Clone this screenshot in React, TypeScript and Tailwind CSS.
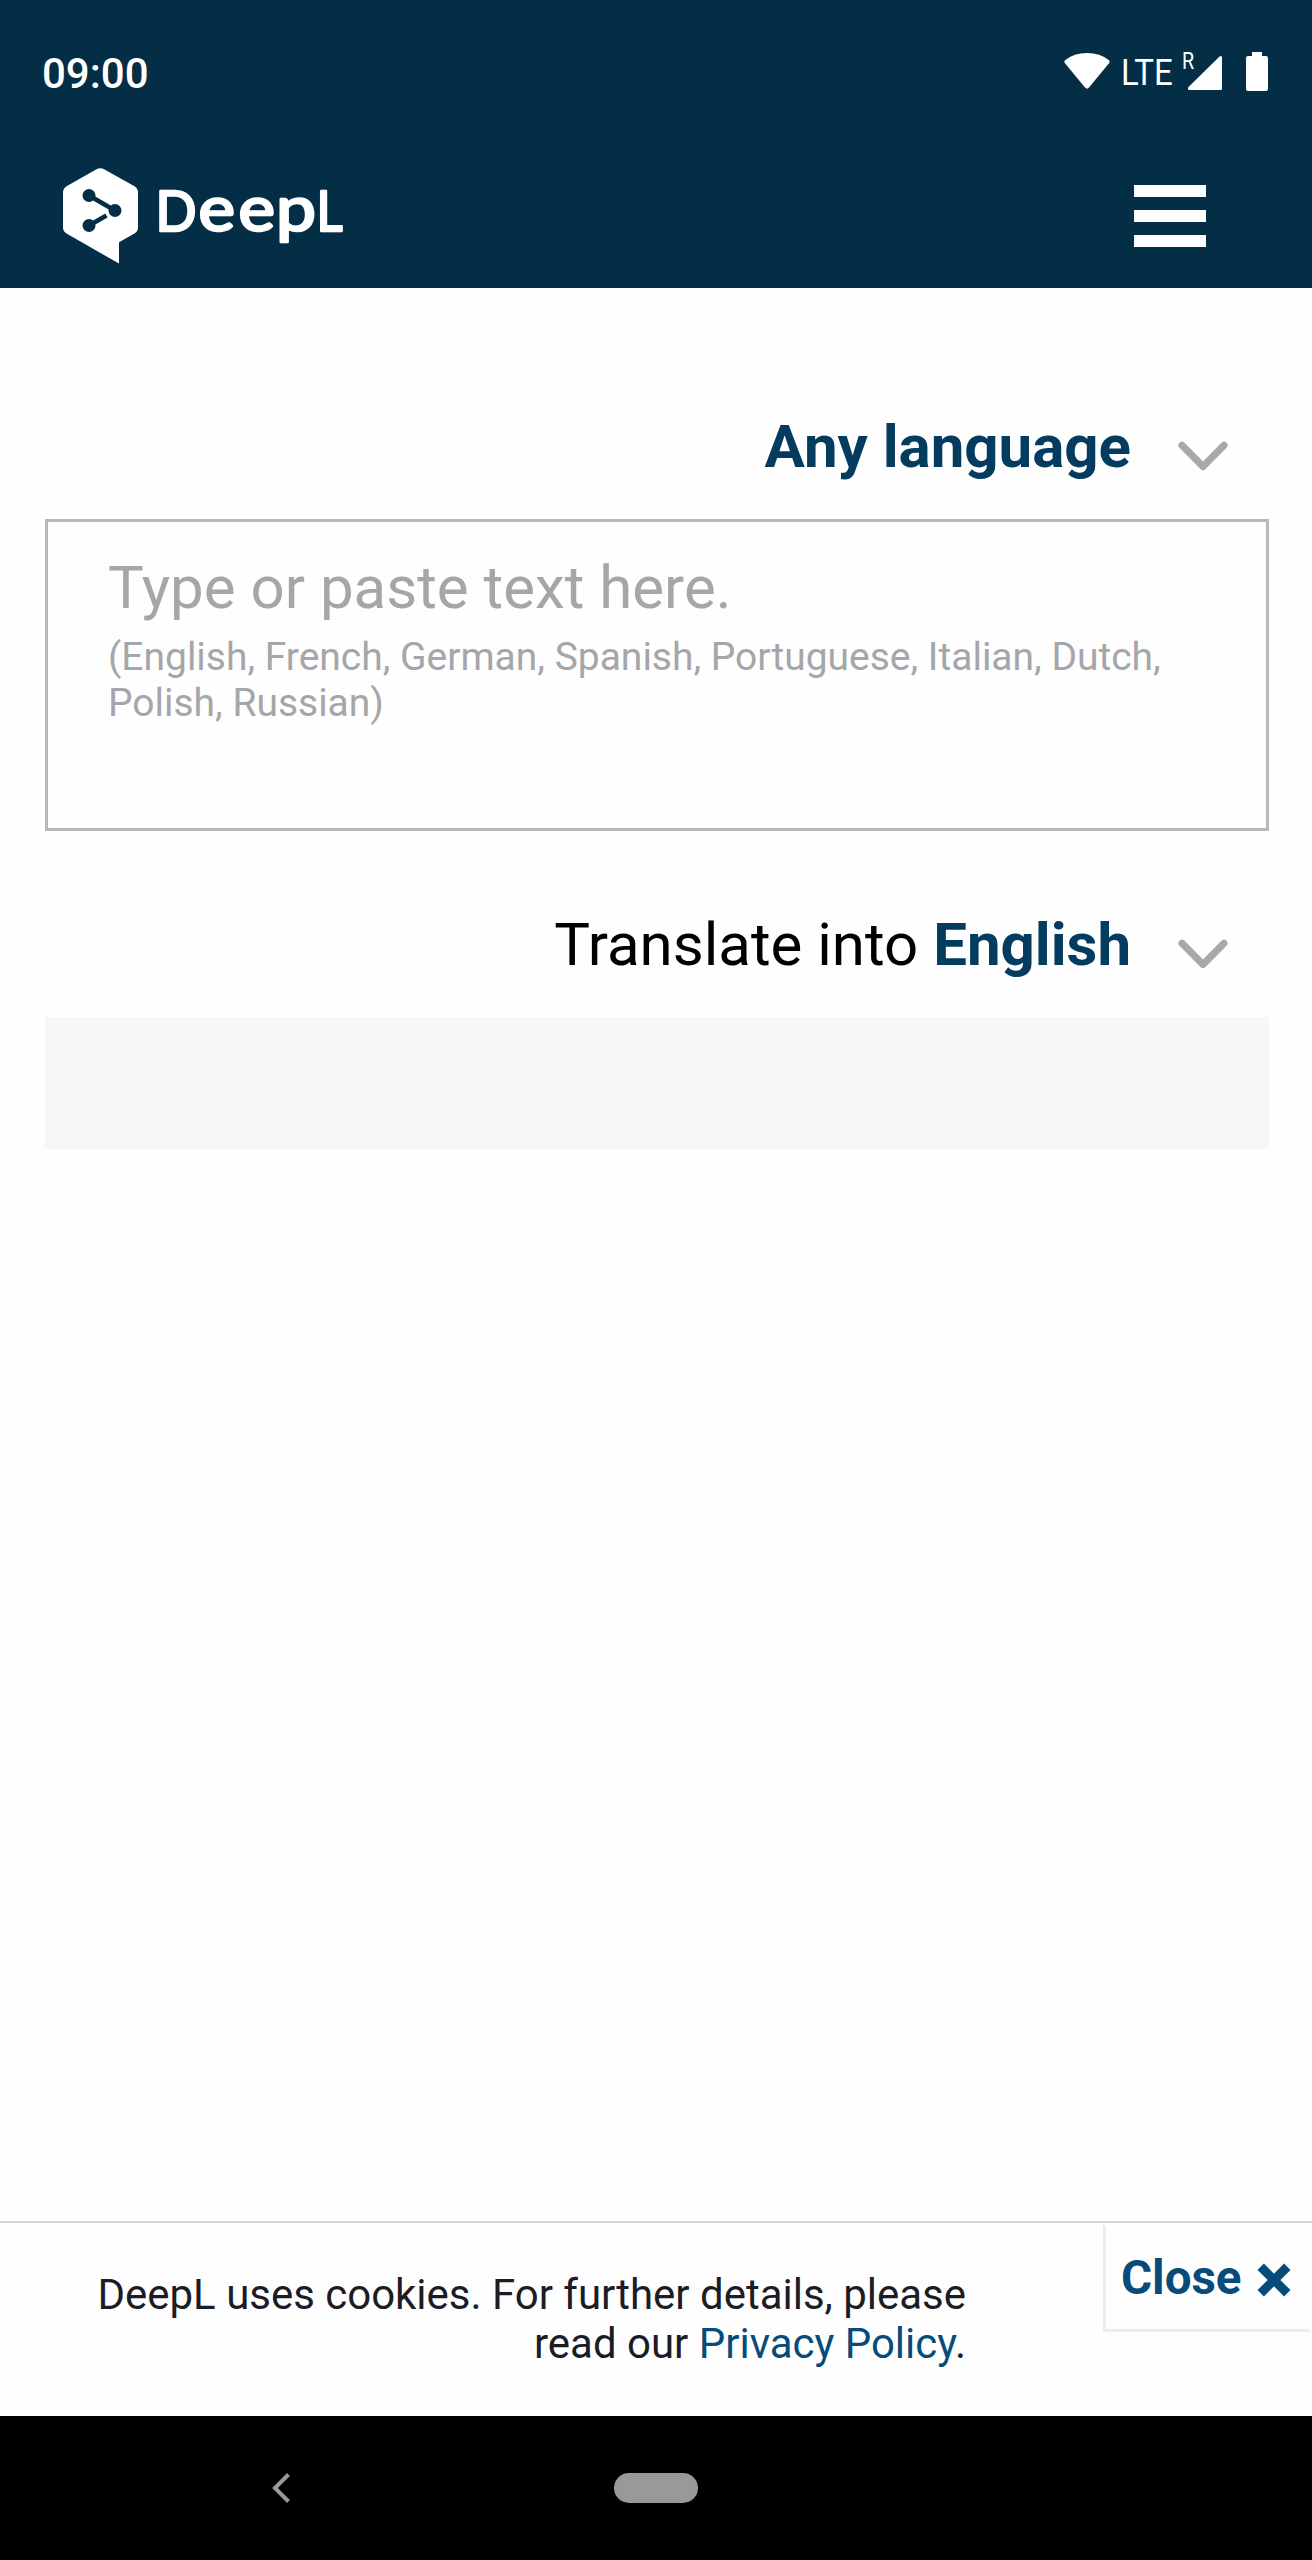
import React from "react";

function StatusBar() {
  return (
    <div className="flex h-[148px] items-center justify-between pl-[42px] pr-[44px] text-white">
      <span className="text-[42px] font-medium leading-none">09:00</span>
      <div className="flex h-[148px] items-start">
        <svg className="mt-[53px] h-[36px] w-[46px]" viewBox="0 0 46 36" fill="currentColor">
          <path d="M1 7.2Q10 0 23 0T45 7.2Q46.200 8.700 45 10.200L25 34.600Q23 36.800 21 34.600L1 10.200Q-.2 8.700 1 7.200Z" />
        </svg>
        <span className="ml-[11px] mt-[41px] w-[52px] origin-left scale-x-[0.89] whitespace-nowrap text-[37px] leading-[64px]">
          LTE
        </span>
        <span className="ml-[9px] mt-[41px] w-[6px] origin-left scale-x-[0.82] text-[24px] leading-[40px]">R</span>
        <svg className="mt-[56px] h-[34px] w-[34px]" viewBox="0 0 34 34" fill="currentColor">
          <path d="M31.300.7Q34-1 34 2V32.500Q34 34 32.500 34H1.500Q-1 33.500.5 31Z" />
        </svg>
        <svg className="ml-[24px] mt-[52px] h-[39px] w-[22px]" viewBox="0 0 22 39" fill="currentColor">
          <path d="M6 0H16V4H20Q22 4 22 6V37Q22 39 20 39H2Q0 39 0 37V6Q0 4 2 4H6Z" />
        </svg>
      </div>
    </div>
  );
}

function Logo() {
  return (
    <div className="flex items-start">
      <svg className="h-[96px] w-[75px]" viewBox="0 0 75 96">
        <path
          fill="#fff"
          d="M33.500 1.200Q37.300-.8 41.100 1.200L71.500 18.300Q75 20.500 75 24.500V59.500Q75 63.300 71.500 65.500L56 74.300V95.600L3.500 65.500Q0 63.300 0 59.500V24.500Q0 20.500 3.500 18.300Z"
        />
        <g fill="#042d46" stroke="#042d46" strokeWidth="4.600">
          <path d="M26 27.500L52 42.500M26 57.500L43.500 47.400" />
          <g stroke="none">
            <circle cx="26" cy="27.500" r="6.500" />
            <circle cx="52" cy="42.500" r="6.500" />
            <circle cx="26" cy="57.500" r="6.500" />
          </g>
        </g>
      </svg>
      <svg
        className="ml-[17px] h-[96px] w-[200px] font-['Lato']"
        viewBox="155 168 200 96"
        fill="#fff"
        stroke="#fff"
        strokeWidth="2.600"
        strokeLinejoin="round"
      >
        <text x="155.500" y="231" fontSize="57" textLength="41" lengthAdjust="spacingAndGlyphs">D</text>
        <text x="198.500" y="231" fontSize="62" textLength="36.500" lengthAdjust="spacingAndGlyphs">e</text>
        <text x="238.500" y="231" fontSize="62" textLength="36.500" lengthAdjust="spacingAndGlyphs">e</text>
        <text x="276" y="231" fontSize="62" textLength="40" lengthAdjust="spacingAndGlyphs">p</text>
        <text x="316.500" y="231" fontSize="57" textLength="26" lengthAdjust="spacingAndGlyphs">L</text>
      </svg>
    </div>
  );
}

function Chevron() {
  return (
    <svg className="mt-[18px] h-[30px] w-[52px]" viewBox="0 0 52 30" fill="none" stroke="#a9a9a9">
      <path d="M5 4.200L26 25.500L47 4.200" strokeWidth="7.200" strokeLinecap="round" strokeLinejoin="round" />
    </svg>
  );
}

function LanguageSelect({ prefix, language }: { prefix?: string; language: string }) {
  return (
    <button className="flex w-full items-center justify-end pr-[83px] text-[60px] leading-[70px]">
      <span className="mr-[46px] whitespace-pre">
        {prefix}
        <span className="font-bold text-[#043c60]">{language}</span>
      </span>
      <Chevron />
    </button>
  );
}

export default function App() {
  return (
    <div className="flex h-[2560px] w-[1312px] flex-col overflow-hidden bg-[#fefefe] font-['Roboto',sans-serif] text-black">
      <header className="h-[288px] bg-[#042d46]">
        <StatusBar />
        <div className="flex items-start justify-between pl-[63px] pr-[106px] pt-[20px]">
          <Logo />
          <button className="mt-[17px] flex w-[72px] flex-col gap-[13px]" aria-label="Menu">
            <span className="h-3 bg-white" />
            <span className="h-3 bg-white" />
            <span className="h-3 bg-white" />
          </button>
        </div>
      </header>

      <main className="flex-1 pt-[124px]">
        <LanguageSelect language="Any language" />
        <div className="ml-[45px] mt-[37px] h-[312px] w-[1224px] border-[3px] border-[#b9b9b9] pl-[60px] pt-[31px] text-[#a5a6aa]">
          <p className="text-[60px] leading-[70px]">Type or paste text here.</p>
          <p className="mt-[11px] w-[1080px] text-[38.98px] leading-[46px]">
            (English, French, German, Spanish, Portuguese, Italian, Dutch, Polish, Russian)
          </p>
        </div>
        <div className="mt-[79px]">
          <LanguageSelect prefix="Translate into " language="English" />
        </div>
        <div className="ml-[45px] mt-[37px] h-[132px] w-[1224px] bg-[#f7f7f7]" />
      </main>

      <section className="flex h-[195px] items-start justify-between border-t-2 border-[#d6d6d6]">
        <p className="mt-[47px] w-[966px] text-right text-[41.97px] leading-[49px] text-[#1b1c25]">
          DeepL uses cookies. For further details, please
          <br />
          read our <a className="text-[#064b79]">Privacy Policy</a>.
        </p>
        <button className="flex h-[109px] w-[209px] items-center border-4 border-b-[3px] border-l-[3px] border-[#ededed] border-r-transparent border-t-transparent pl-[15px] pt-[2px] text-[47.5px] font-bold leading-none text-[#064b79]">
          <span>Close</span>
          <svg className="ml-[15px] mt-[2px] h-[34px] w-[34px] shrink-0" viewBox="0 0 34 34" stroke="currentColor" strokeWidth="9">
            <path d="M3.700 3.700L30.300 30.300M30.300 3.700L3.700 30.300" />
          </svg>
        </button>
      </section>

      <nav className="flex h-[144px] items-center bg-black pl-[271px]">
        <svg className="h-[32px] w-[20px]" viewBox="0 0 20 32" fill="none" stroke="#999" strokeWidth="4">
          <path d="M17.500 2.500L4 16L17.500 29.500" />
        </svg>
        <span className="ml-[323px] h-[30px] w-[84px] rounded-full bg-[#999]" />
      </nav>
    </div>
  );
}
